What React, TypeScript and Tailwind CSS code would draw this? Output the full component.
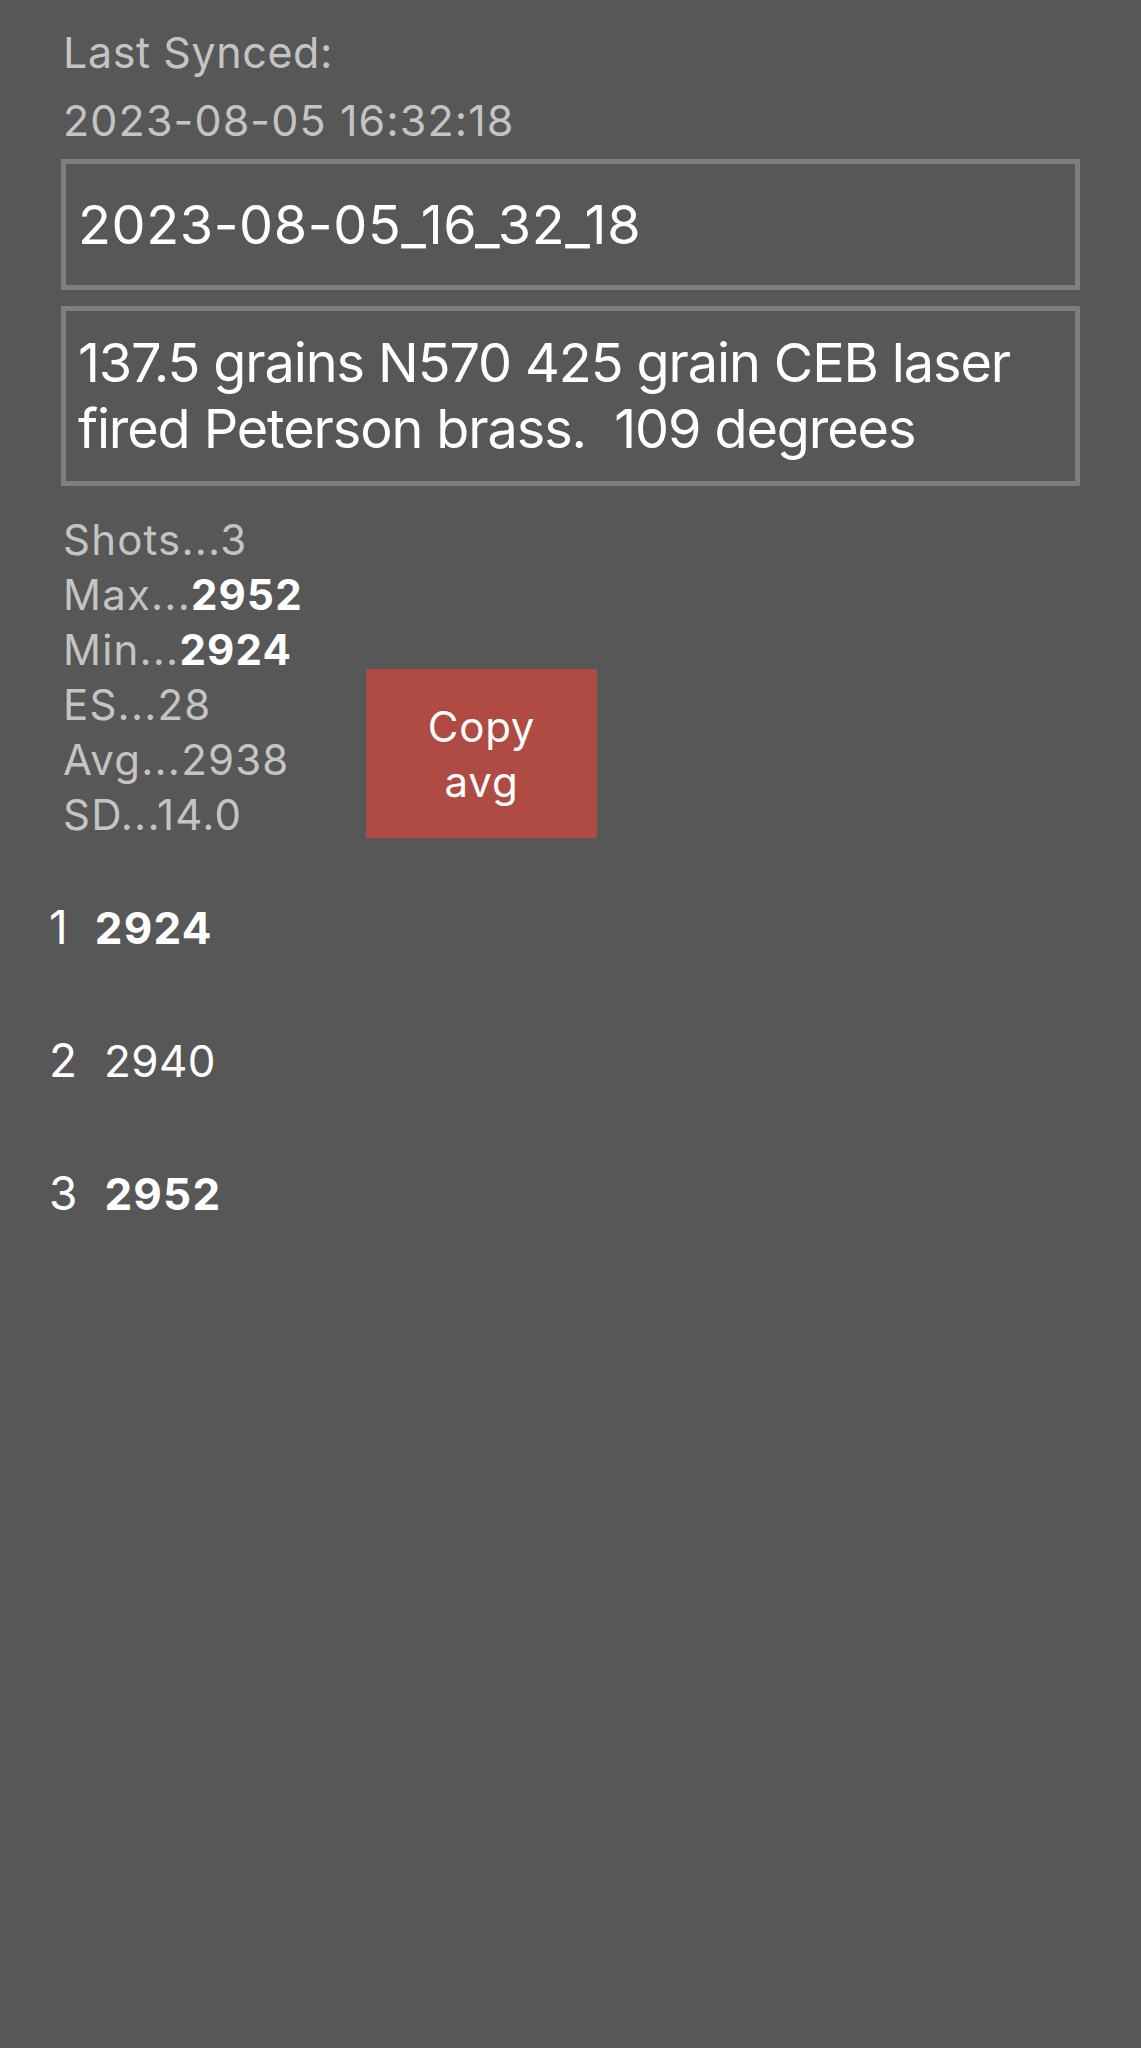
import React from "react";

const shots = [
  { n: 1, v: "2924", bold: true },
  { n: 2, v: "2940", bold: false },
  { n: 3, v: "2952", bold: true },
];

export default function App() {
  return (
    <div
      className="min-h-screen w-full bg-[#575757] text-white"
      style={{ fontFamily: "Inter, 'Noto Sans', sans-serif" }}
    >
      <div className="px-[61px] pt-[18px]">
        <div className="pl-[2px] text-[#c4c4c4] text-[43px] leading-[68px]">
          <p className="tracking-[0.6px]">Last Synced:</p>
          <p className="tracking-[1.1px]">2023-08-05 16:32:18</p>
        </div>
        <div className="mt-[5px] h-[131px] border-[5px] border-[#7f7f7f] flex items-center px-[12px] text-[54px] tracking-[0.6px] text-white">
          2023-08-05_16_32_18
        </div>
        <div className="mt-[16px] h-[180px] border-[5px] border-[#7f7f7f] flex items-center px-[12px] text-[54px] leading-[66px] tracking-[-1.1px] text-white">
          <p>
            137.5 grains N570 425 grain CEB laser
            <br />
            fired Peterson brass.&nbsp; 109 degrees
          </p>
        </div>
        <div className="mt-[26px] flex items-end">
          <div className="w-[305px] pl-[2px] text-[42px] leading-[55px] tracking-[1.2px] text-[#c4c4c4]">
            <p>Shots...3</p>
            <p>
              Max...<span className="font-bold text-white">2952</span>
            </p>
            <p>
              Min...<span className="font-bold text-white">2924</span>
            </p>
            <p>ES...28</p>
            <p>Avg...2938</p>
            <p>SD...14.0</p>
          </div>
          <button className="mb-[4px] w-[231px] h-[169px] bg-[#b04b43] text-white text-[42px] leading-[55px] tracking-[0.8px] flex flex-col items-center justify-center">
            <span>Copy</span>
            <span>avg</span>
          </button>
        </div>
      </div>
      <div className="pl-[49px] mt-[19px]">
        {shots.map((s) => (
          <div key={s.n} className="h-[133px] flex items-center gap-[27px]">
            <span className="text-[46px] text-white">{s.n}</span>
            <span className={`text-[44px] text-white ${s.bold ? "font-bold tracking-[1.2px]" : "tracking-[0.4px]"}`}>{s.v}</span>
          </div>
        ))}
      </div>
    </div>
  );
}
